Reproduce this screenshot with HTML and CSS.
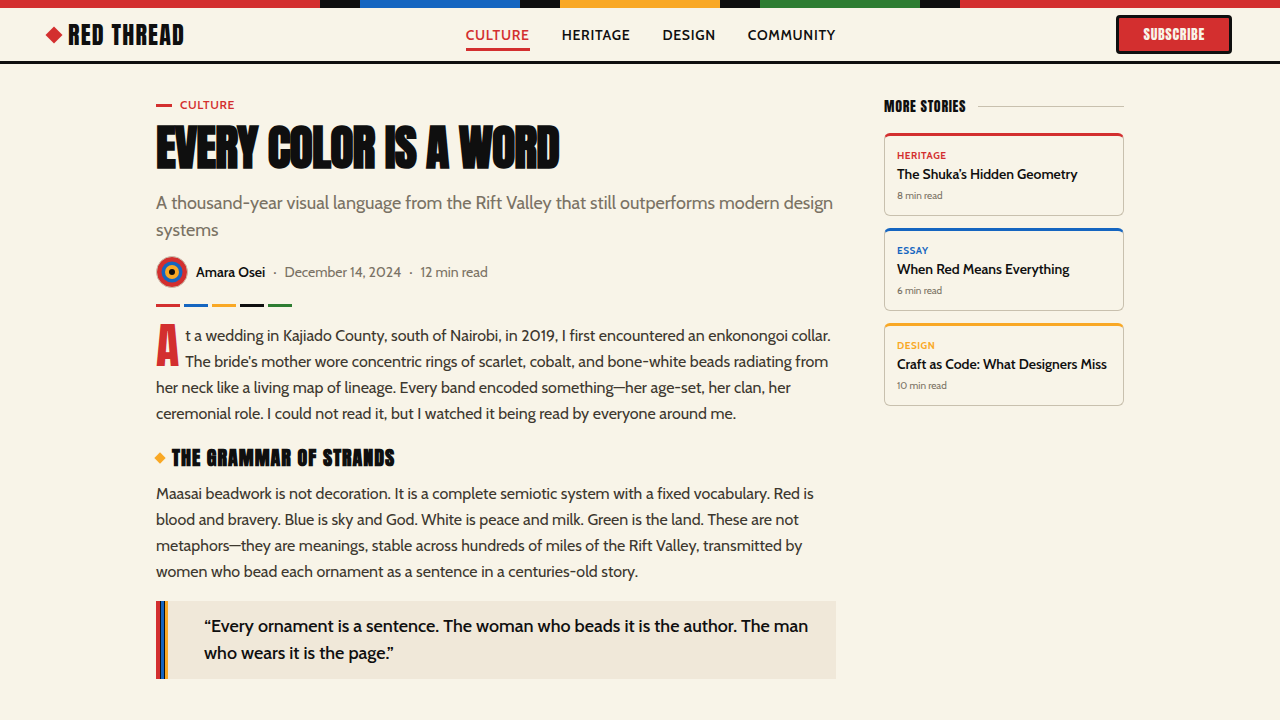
FILE: index.html
```html
<!DOCTYPE html>
<html lang="en">
<head>
    <meta charset="UTF-8">
    <meta name="viewport" content="width=device-width, initial-scale=1.0">
    <title>Every Color Is a Word - Red Thread</title>
    <link rel="stylesheet" href="styles.css">
</head>
<body>
    <div class="bead-band"></div>

    <header class="site-header">
        <a class="logo" href="#">
            <svg class="logo-mark" viewBox="0 0 18 18" aria-hidden="true"><path d="M9 0.5 17.5 9 9 17.5 0.5 9Z" fill="#d32f2f"/></svg>
            RED THREAD
        </a>
        <nav class="nav">
            <a class="active" href="#">CULTURE</a>
            <a href="#">HERITAGE</a>
            <a href="#">DESIGN</a>
            <a href="#">COMMUNITY</a>
        </nav>
        <button class="subscribe" type="button">SUBSCRIBE</button>
    </header>

    <div class="page">
        <main class="article">
            <div class="eyebrow">CULTURE</div>
            <h1>EVERY COLOR IS A WORD</h1>
            <p class="deck">A thousand-year visual language from the Rift Valley that still outperforms modern design systems</p>

            <div class="byline">
                <svg class="avatar" viewBox="0 0 32 32" aria-hidden="true">
                    <circle cx="16" cy="16" r="15.5" fill="#d32f2f" stroke="#c8c0ae"/>
                    <circle cx="16" cy="16" r="10.5" fill="#1565c0"/>
                    <circle cx="16" cy="16" r="7" fill="#f9a825"/>
                    <circle cx="16" cy="16" r="3" fill="#0f0f0f"/>
                </svg>
                <span class="author">Amara Osei</span>
                <span>·</span>
                <span>December 14, 2024</span>
                <span>·</span>
                <span>12 min read</span>
            </div>

            <div class="strand">
                <span class="red"></span>
                <span class="blue"></span>
                <span class="gold"></span>
                <span class="black"></span>
                <span class="green"></span>
            </div>

            <p class="lead">At a wedding in Kajiado County, south of Nairobi, in 2019, I first encountered an enkonongoi collar. The bride's mother wore concentric rings of scarlet, cobalt, and bone-white beads radiating from her neck like a living map of lineage. Every band encoded something—her age-set, her clan, her ceremonial role. I could not read it, but I watched it being read by everyone around me.</p>

            <h2>THE GRAMMAR OF STRANDS</h2>
            <p>Maasai beadwork is not decoration. It is a complete semiotic system with a fixed vocabulary. Red is blood and bravery. Blue is sky and God. White is peace and milk. Green is the land. These are not metaphors—they are meanings, stable across hundreds of miles of the Rift Valley, transmitted by women who bead each ornament as a sentence in a centuries-old story.</p>

            <blockquote>“Every ornament is a sentence. The woman who beads it is the author. The man who wears it is the page.”</blockquote>
        </main>

        <aside class="sidebar">
            <h2 class="sidebar-title">MORE STORIES</h2>
            <a class="card card-red" href="#">
                <span class="card-tag">HERITAGE</span>
                <span class="card-title">The Shuka’s Hidden Geometry</span>
                <span class="card-time">8 min read</span>
            </a>
            <a class="card card-blue" href="#">
                <span class="card-tag">ESSAY</span>
                <span class="card-title">When Red Means Everything</span>
                <span class="card-time">6 min read</span>
            </a>
            <a class="card card-gold" href="#">
                <span class="card-tag">DESIGN</span>
                <span class="card-title">Craft as Code: What Designers Miss</span>
                <span class="card-time">10 min read</span>
            </a>
        </aside>
    </div>
</body>
</html>
```
FILE: styles.css
```css
:root {
    --red: #d32f2f;
    --blue: #1565c0;
    --gold: #f9a825;
    --green: #2e7d32;
    --black: #0f0f0f;
    --bone: #f8f4e8;
    --sand: #f0e8d9;
    --line: #c8c0ae;
    --muted: #7a7264;
    --text: #3d382f;
    --display: Anton, "Liberation Sans Narrow", sans-serif;
    --body: Cabin, Lato, sans-serif;
}
* { box-sizing: border-box; }
body {
    margin: 0;
    background: var(--bone);
    color: var(--text);
    font-family: var(--body);
    font-size: 16px;
    line-height: 26px;
    -webkit-font-smoothing: antialiased;
}
a { color: inherit; text-decoration: none; }
h1, h2, p, blockquote { margin: 0; }

.bead-band {
    height: 8px;
    background: repeating-linear-gradient(90deg,
        var(--red) 0 320px, var(--black) 320px 360px,
        var(--blue) 360px 520px, var(--black) 520px 560px,
        var(--gold) 560px 720px, var(--black) 720px 760px,
        var(--green) 760px 920px, var(--black) 920px 960px);
}

/* Header */
.site-header {
    display: flex;
    align-items: center;
    justify-content: space-between;
    height: 56px;
    padding: 0 48px 0 45px;
    border-bottom: 3px solid var(--black);
}
.logo {
    display: flex;
    align-items: center;
    gap: 5px;
    color: var(--black);
    font: 24px/32px var(--display);
    letter-spacing: 0.05em;
}
.logo-mark { width: 18px; height: 18px; }
.nav { display: flex; gap: 32px; }
.nav a {
    padding: 7px 0 3px;
    border-bottom: 3px solid transparent;
    color: var(--black);
    font-size: 14px;
    font-weight: 600;
    line-height: 20px;
    letter-spacing: 0.05em;
}
.nav .active { color: var(--red); border-color: var(--red); }
.subscribe {
    padding: 6px 24px;
    border: 3px solid var(--black);
    border-radius: 4px;
    background: var(--red);
    color: var(--bone);
    font: 14px/21px var(--display);
    letter-spacing: 0.05em;
    cursor: pointer;
}

/* Article */
.page {
    display: grid;
    grid-template-columns: minmax(0, 1fr) 240px;
    gap: 48px;
    max-width: 1016px;
    margin: 0 auto;
    padding: 32px 24px 40px;
}
.eyebrow {
    display: flex;
    align-items: center;
    gap: 8px;
    color: var(--red);
    font-size: 12px;
    font-weight: 600;
    line-height: 18px;
    letter-spacing: 0.05em;
}
.eyebrow::before {
    content: "";
    width: 16px;
    height: 3px;
    background: var(--red);
}
h1 {
    margin: 6px 0 14px;
    color: var(--black);
    font: bold 48px/56px var(--display);
    letter-spacing: -0.02em;
}
.deck {
    color: var(--muted);
    font-size: 18px;
    line-height: 27px;
}
.byline {
    display: flex;
    align-items: center;
    gap: 8px;
    margin: 12px 0 16px;
    color: var(--muted);
    font-size: 14px;
    line-height: 22px;
}
.avatar { width: 32px; height: 32px; }
.author { color: var(--black); font-weight: 600; }
.strand { display: flex; gap: 4px; margin-bottom: 16px; }
.strand span { width: 24px; height: 3px; }
.red { background: var(--red); }
.blue { background: var(--blue); }
.gold { background: var(--gold); }
.black { background: var(--black); }
.green { background: var(--green); }

.lead::first-letter {
    float: left;
    margin-right: 6px;
    color: var(--red);
    font: 48px/46px var(--display);
}
.article h2 {
    display: flex;
    align-items: center;
    gap: 8px;
    margin: 16px 0 8px;
    color: var(--black);
    font: bold 20px/30px var(--display);
    letter-spacing: 0.05em;
}
.article h2::before {
    content: "";
    width: 8px;
    height: 8px;
    background: var(--gold);
    transform: rotate(45deg);
}
blockquote {
    margin-top: 16px;
    padding: 12px 24px 12px 48px;
    background: linear-gradient(90deg,
        var(--red) 0 4px, var(--black) 4px 5px,
        var(--blue) 5px 8px, var(--black) 8px 9px,
        var(--gold) 9px 12px, var(--sand) 12px);
    color: var(--black);
    font-size: 18px;
    font-weight: 500;
    line-height: 27px;
}

/* Sidebar */
.sidebar { display: flex; flex-direction: column; gap: 12px; }
.sidebar-title {
    display: flex;
    align-items: center;
    gap: 12px;
    margin-bottom: 4px;
    color: var(--black);
    font: 14px/21px var(--display);
    letter-spacing: 0.05em;
}
.sidebar-title::after {
    content: "";
    flex: 1;
    height: 1px;
    background: var(--line);
}
.card {
    display: flex;
    flex-direction: column;
    padding: 12px;
    border: 1px solid var(--line);
    border-top: 3px solid;
    border-radius: 6px;
}
.card-red { border-top-color: var(--red); }
.card-blue { border-top-color: var(--blue); }
.card-gold { border-top-color: var(--gold); }
.card-tag {
    font-size: 10px;
    font-weight: 700;
    line-height: 16px;
    letter-spacing: 0.05em;
}
.card-red .card-tag { color: var(--red); }
.card-blue .card-tag { color: var(--blue); }
.card-gold .card-tag { color: var(--gold); }
.card-title {
    margin-bottom: 4px;
    color: var(--black);
    font-size: 14px;
    font-weight: 600;
    line-height: 20px;
}
.card-time { color: var(--muted); font-size: 10px; line-height: 15px; }

@media (max-width: 860px) {
    .page { grid-template-columns: minmax(0, 1fr); }
    .site-header { height: auto; flex-wrap: wrap; padding: 8px 24px; }
}
```
